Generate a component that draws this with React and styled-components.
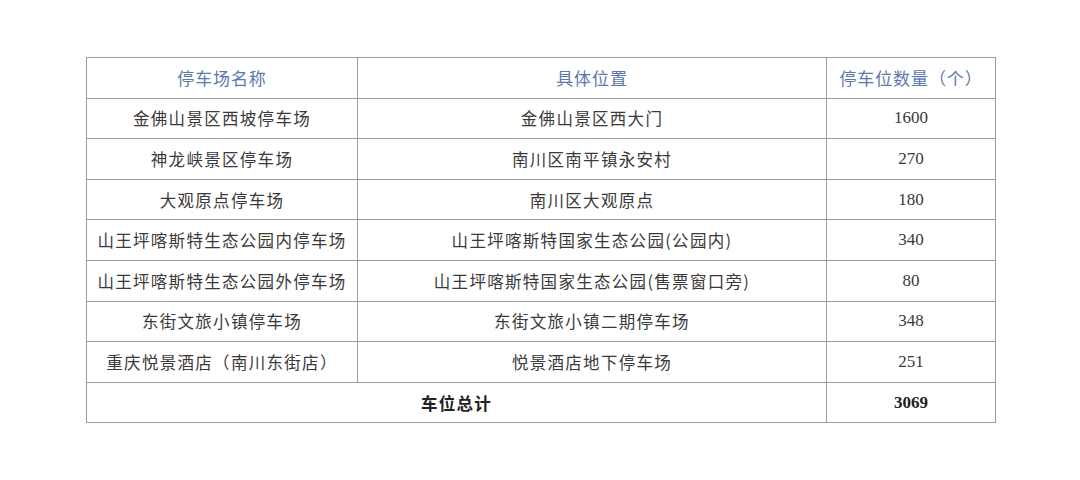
import styled, { createGlobalStyle } from 'styled-components';

const GlobalStyle = createGlobalStyle`
body {
  margin: 0;
  background: #ffffff;
  font-family: "Liberation Serif", "Noto Sans CJK SC", serif;
}
`

const rows = [
    { name: '金佛山景区西坡停车场', place: '金佛山景区西大门', count: '1600' },
    { name: '神龙峡景区停车场', place: '南川区南平镇永安村', count: '270' },
    { name: '大观原点停车场', place: '南川区大观原点', count: '180' },
    { name: '山王坪喀斯特生态公园内停车场', place: '山王坪喀斯特国家生态公园(公园内)', count: '340' },
    { name: '山王坪喀斯特生态公园外停车场', place: '山王坪喀斯特国家生态公园(售票窗口旁)', count: '80' },
    { name: '东街文旅小镇停车场', place: '东街文旅小镇二期停车场', count: '348' },
    { name: '重庆悦景酒店（南川东街店）', place: '悦景酒店地下停车场', count: '251' },
];

export default function App() {
    return (
        <Page>
            <GlobalStyle />
            <Table>
                <colgroup>
                    <col style={{ width: 271 }} />
                    <col style={{ width: 469 }} />
                    <col style={{ width: 169 }} />
                </colgroup>
                <thead>
                    <tr>
                        <HeadCell>停车场名称</HeadCell>
                        <HeadCell>具体位置</HeadCell>
                        <HeadCell>停车位数量（个）</HeadCell>
                    </tr>
                </thead>
                <tbody>
                    {rows.map(row => (
                        <tr key={row.name}>
                            <Cell>{row.name}</Cell>
                            <Cell>{row.place}</Cell>
                            <Cell $number>{row.count}</Cell>
                        </tr>
                    ))}
                    <tr>
                        <Cell colSpan={2} $bold>车位总计</Cell>
                        <Cell $number $bold>3069</Cell>
                    </tr>
                </tbody>
            </Table>
        </Page>
    );
}

const Page = styled.div`
width: 1080px;
height: 480px;
padding: 57px 0 0 86px;
box-sizing: border-box;
`

const Table = styled.table`
border-collapse: collapse;
table-layout: fixed;
width: 910px;
color: #333333;
`

const HeadCell = styled.th`
height: 39.6px;
padding: 0;
border: 1px solid #9c9c9c;
font-family: "Noto Sans CJK SC", sans-serif;
font-weight: 400;
font-size: 17px;
letter-spacing: 0.9px;
color: #5b78ad;
text-align: center;
vertical-align: middle;
`

const Cell = styled.td`
height: 39.6px;
padding: 0;
border: 1px solid #9c9c9c;
font-family: ${p => p.$number ? '"Liberation Serif", serif' : '"Noto Sans CJK SC", sans-serif'};
font-size: ${p => p.$number ? '17px' : '16.5px'};
font-weight: ${p => p.$bold ? 700 : 400};
letter-spacing: ${p => p.$number ? '0' : '1.3px'};
color: ${p => p.$bold ? '#222222' : '#3a3a3a'};
text-align: center;
vertical-align: middle;
white-space: nowrap;
`
